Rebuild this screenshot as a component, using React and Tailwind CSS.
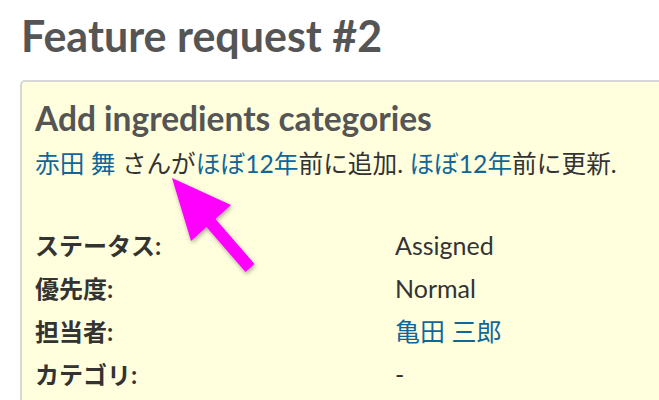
import React from "react";

const latin = "font-['Lato','Noto_Sans_CJK_JP',sans-serif]";

const rows = [
  { label: "ステータス:", value: "Assigned" },
  { label: "優先度:", value: "Normal" },
  { label: "担当者:", value: "亀田 三郎", link: true },
  { label: "カテゴリ:", value: "-" },
];

const Arrow = () => (
  <svg className="absolute left-0 top-0 pointer-events-none" width="659" height="400" viewBox="0 0 659 400">
    <defs>
      <filter id="sh" x="-20%" y="-20%" width="140%" height="140%">
        <feDropShadow dx="1" dy="2" stdDeviation="2" floodColor="#000" floodOpacity="0.35" />
      </filter>
    </defs>
    <polygon
      points="172,178 231,205 215.5,219 254.5,264 245.5,272 206.5,227 191,241"
      fill="#ff00ff"
      filter="url(#sh)"
    />
  </svg>
);

export default function App() {
  return (
    <div className={`relative w-[659px] h-[400px] overflow-hidden bg-white ${latin}`}>
      <h2 className="pl-[21px] pt-[12px] text-[43px] font-bold leading-[48px] text-[#555]">Feature request #2</h2>
      <div className="ml-[20px] mt-[20px] w-[700px] h-[400px] rounded-[5px] border-2 border-[#d7d7d7] bg-[#ffffdd] pl-[13px] pt-[17px]">
        <h3 className="text-[33.5px] font-bold leading-[38px] text-[#555]">Add ingredients categories</h3>
        <p className="mt-[12px] text-[24.7px] leading-[30px] text-[#333]">
          <span className="text-[#169]">赤田 舞</span> さんが<span className="text-[#169]">ほぼ12年</span>前に追加.{" "}
          <span className="text-[#169]">ほぼ12年</span>前に更新.
        </p>
        <div className="mt-[45px] flex flex-col">
          {rows.map((r) => (
            <div key={r.label} className="flex h-[43px] items-center">
              <div className="w-[360px] text-[24px] font-bold text-[#333]">{r.label}</div>
              <div className={`text-[25px] ${r.link ? "text-[#169]" : "text-[#333]"}`}>{r.value}</div>
            </div>
          ))}
        </div>
      </div>
      <Arrow />
    </div>
  );
}
